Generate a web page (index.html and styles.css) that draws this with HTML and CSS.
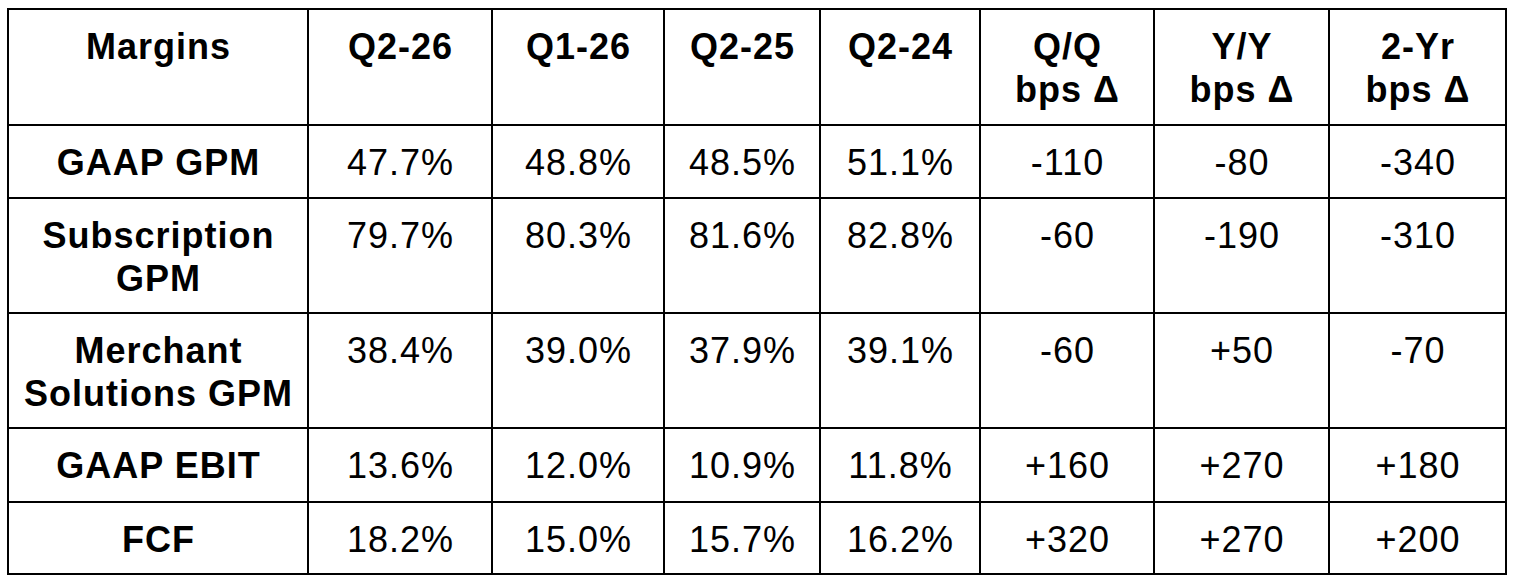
FILE: index.html
```html
<!DOCTYPE html>
<html lang="en">
<head>
<meta charset="utf-8">
<title>Margins</title>
<link rel="stylesheet" href="styles.css">
</head>
<body>
<div class="margins-table">
  <div class="cell head">Margins</div>
  <div class="cell head">Q2-26</div>
  <div class="cell head">Q1-26</div>
  <div class="cell head">Q2-25</div>
  <div class="cell head">Q2-24</div>
  <div class="cell head">Q/Q<br>bps Δ</div>
  <div class="cell head">Y/Y<br>bps Δ</div>
  <div class="cell head">2-Yr<br>bps Δ</div>

  <div class="cell label">GAAP GPM</div>
  <div class="cell">47.7%</div>
  <div class="cell">48.8%</div>
  <div class="cell">48.5%</div>
  <div class="cell">51.1%</div>
  <div class="cell">-110</div>
  <div class="cell">-80</div>
  <div class="cell">-340</div>

  <div class="cell label">Subscription<br>GPM</div>
  <div class="cell">79.7%</div>
  <div class="cell">80.3%</div>
  <div class="cell">81.6%</div>
  <div class="cell">82.8%</div>
  <div class="cell">-60</div>
  <div class="cell">-190</div>
  <div class="cell">-310</div>

  <div class="cell label">Merchant<br>Solutions GPM</div>
  <div class="cell">38.4%</div>
  <div class="cell">39.0%</div>
  <div class="cell">37.9%</div>
  <div class="cell">39.1%</div>
  <div class="cell">-60</div>
  <div class="cell">+50</div>
  <div class="cell">-70</div>

  <div class="cell label">GAAP EBIT</div>
  <div class="cell">13.6%</div>
  <div class="cell">12.0%</div>
  <div class="cell">10.9%</div>
  <div class="cell">11.8%</div>
  <div class="cell">+160</div>
  <div class="cell">+270</div>
  <div class="cell">+180</div>

  <div class="cell label">FCF</div>
  <div class="cell">18.2%</div>
  <div class="cell">15.0%</div>
  <div class="cell">15.7%</div>
  <div class="cell">16.2%</div>
  <div class="cell">+320</div>
  <div class="cell">+270</div>
  <div class="cell">+200</div>
</div>
</body>
</html>
```
FILE: styles.css
```css
html, body {
  margin: 0;
  padding: 0;
  background: #ffffff;
}

body {
  padding: 8px 0 0 7px;
  font-family: "Liberation Sans", Arial, Helvetica, sans-serif;
  color: #000000;
}

.margins-table {
  display: inline-grid;
  grid-template-columns: 298px 182px 170px 154px 158px 172px 173px 175px;
  grid-template-rows: 114px 71px 113px 113px 72px 70px;
  gap: 2px;
  padding: 2px;
  background: #000000;
}

.cell {
  background: #ffffff;
  text-align: center;
  font-size: 36px;
  letter-spacing: 1px;
  line-height: 43px;
  padding: 15px 4px 0 5px;
  white-space: nowrap;
}

.head,
.label {
  font-weight: bold;
}
```
